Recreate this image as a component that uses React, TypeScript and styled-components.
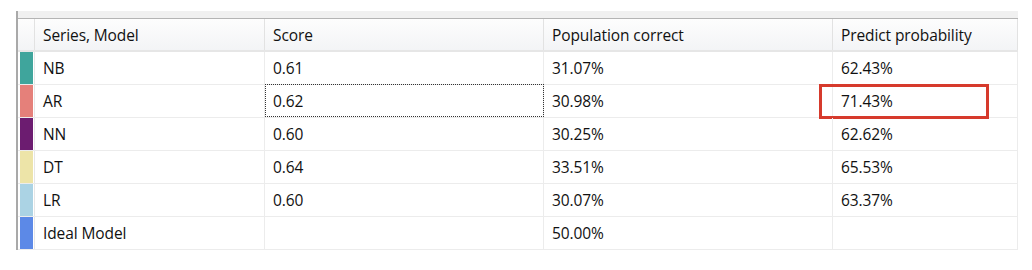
import React from "react";
import styled, { createGlobalStyle } from "styled-components";

const Global = createGlobalStyle`
  html, body { margin: 0; padding: 0; background: #ffffff; }
  body { font-family: "Open Sans", "Noto Sans", sans-serif; }
`;

const Page = styled.div`
  width: 1032px;
  height: 270px;
  padding: 11px 0 0 16px;
  box-sizing: border-box;
  background: #ffffff;
`;

const Frame = styled.div`
  width: 1000px;
  border-left: 2px solid #a9a9a9;
  display: flex;
  flex-direction: column;
`;

const TopBand = styled.div`
  height: 7px;
  background: #f0f0f0;
  border-bottom: 1px solid #b4b4b4;
`;

const COLS = "17px 230px 279px 289px 1fr";

const HeaderRow = styled.div`
  display: grid;
  grid-template-columns: ${COLS};
  height: 31px;
  background: linear-gradient(#fdfdfd, #f3f4f6);
  border-bottom: 2px solid #e6e6e6;
`;

const HeaderCell = styled.div`
  display: flex;
  align-items: center;
  padding-left: 8px;
  font-size: 15.5px;
  letter-spacing: -0.1px;
  color: #111111;
  border-right: 1px solid #e2e2e2;
  white-space: nowrap;
`;

const Row = styled.div`
  display: grid;
  grid-template-columns: ${COLS};
  height: 33px;
  box-sizing: border-box;
  border-bottom: 1px solid #ececec;
  position: relative;
`;

const SwatchCell = styled.div`
  padding: 0 1px 0 2px;
  border-right: 1px solid #e6e6e6;
  display: flex;
`;

const Swatch = styled.div<{ $c: string }>`
  flex: 1;
  background: ${(p) => p.$c};
`;

const Cell = styled.div<{ $focus?: boolean }>`
  display: flex;
  align-items: center;
  padding-left: 8px;
  font-size: 15.5px;
  letter-spacing: -0.1px;
  color: #111111;
  border-right: 1px solid #ececec;
  white-space: nowrap;
  position: relative;
  ${(p) =>
    p.$focus
      ? `outline: 1px dotted #333; outline-offset: -1px; margin-top: -1px;`
      : ""}
`;

const Highlight = styled.div`
  position: absolute;
  left: 801px;
  top: -1px;
  width: 164px;
  height: 29px;
  border: 3px solid #d63a2c;
  pointer-events: none;
`;

type R = { name: string; color: string; score: string; pop: string; pred: string };

const rows: R[] = [
  { name: "NB", color: "#3fa59c", score: "0.61", pop: "31.07%", pred: "62.43%" },
  { name: "AR", color: "#e5807a", score: "0.62", pop: "30.98%", pred: "71.43%" },
  { name: "NN", color: "#6c1c70", score: "0.60", pop: "30.25%", pred: "62.62%" },
  { name: "DT", color: "#ede4a8", score: "0.64", pop: "33.51%", pred: "65.53%" },
  { name: "LR", color: "#abd3e4", score: "0.60", pop: "30.07%", pred: "63.37%" },
  { name: "Ideal Model", color: "#5c89e7", score: "", pop: "50.00%", pred: "" },
];

export default function App() {
  return (
    <Page>
      <Global />
      <Frame>
        <TopBand />
        <HeaderRow>
          <HeaderCell />
          <HeaderCell>Series, Model</HeaderCell>
          <HeaderCell>Score</HeaderCell>
          <HeaderCell>Population correct</HeaderCell>
          <HeaderCell>Predict probability</HeaderCell>
        </HeaderRow>
        {rows.map((r) => (
          <Row key={r.name}>
            <SwatchCell>
              <Swatch $c={r.color} />
            </SwatchCell>
            <Cell>{r.name}</Cell>
            <Cell $focus={r.name === "AR"}>{r.score}</Cell>
            <Cell>{r.pop}</Cell>
            <Cell>{r.pred}</Cell>
            {r.name === "AR" && <Highlight />}
          </Row>
        ))}
      </Frame>
    </Page>
  );
}
